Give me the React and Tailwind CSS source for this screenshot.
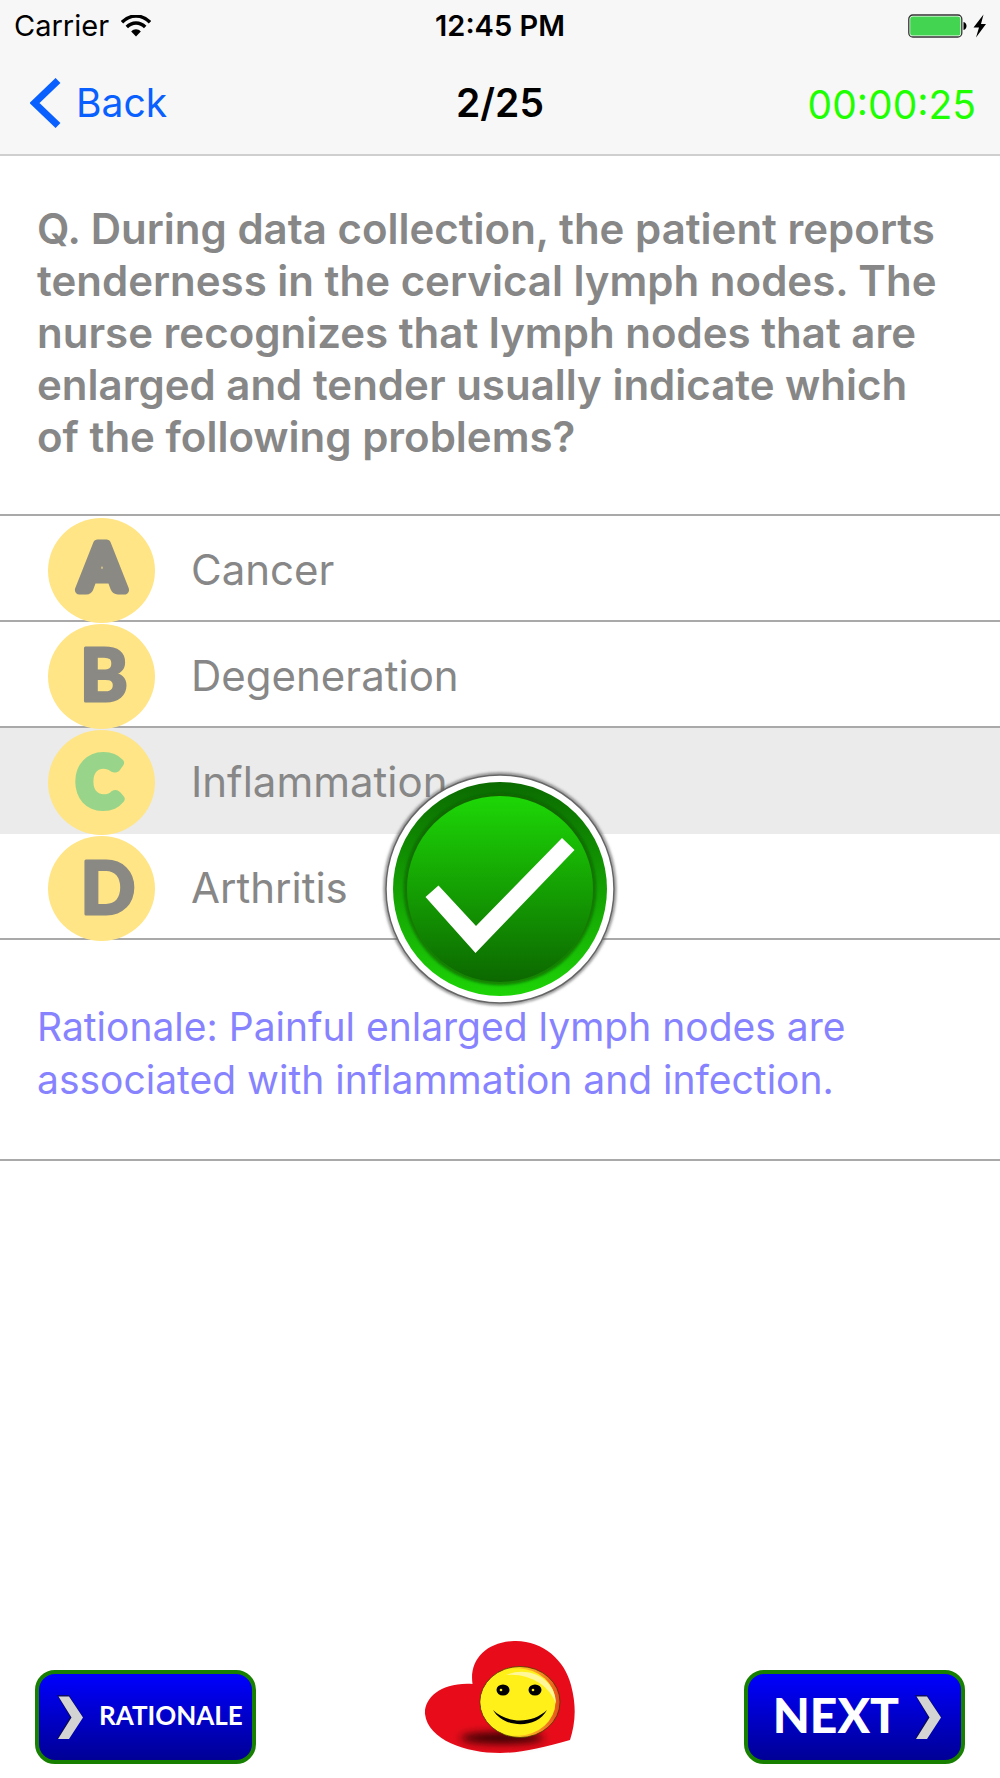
import { useState } from 'react';

const options = [
  { letter: 'A', label: 'Cancer', weight: 700, size: 64, stroke: 9, x: 54, y: 72 },
  { letter: 'B', label: 'Degeneration', weight: 900, size: 72, stroke: 3, x: 56, y: 77 },
  { letter: 'C', label: 'Inflammation', weight: 700, size: 66, stroke: 9, x: 51, y: 76 },
  { letter: 'D', label: 'Arthritis', weight: 900, size: 72, stroke: 3, x: 60, y: 78 },
];

const correct = 'C';

function StatusBar() {
  return (
    <div className="grid grid-cols-3 items-center px-[14px] h-[52px] text-[29px] leading-[36px] text-black">
      <div className="flex items-center gap-3">
        <span>Carrier</span>
        <svg width="30" height="22" viewBox="0 0 30 22" aria-hidden="true">
          <path d="M1 7.2C9 -1 21 -1 29 7.2" fill="none" stroke="#000" strokeWidth="3.4" />
          <path d="M5.8 12C11 6.600 19 6.600 24.200 12" fill="none" stroke="#000" strokeWidth="3.4" />
          <path d="M10.200 16.400C12.800 13.600 17.200 13.600 19.800 16.400L15 21.600Z" fill="#000" />
        </svg>
      </div>
      <span className="text-center font-semibold">12:45 PM</span>
      <svg className="justify-self-end" width="80" height="24" viewBox="0 0 80 24" aria-hidden="true">
        <rect x="2.800" y="1" width="53" height="22" rx="4" fill="#fff" stroke="#333" strokeWidth="1.300" />
        <rect x="4.200" y="2.400" width="50.200" height="19.200" rx="2.600" fill="#43d551" />
        <path d="M57.500 8C61.500 9 61.500 15 57.500 16Z" fill="#000" />
        <path d="M77.500 0.500L67.500 13.500H73L70 23.500L80 10H75Z" fill="#000" />
      </svg>
    </div>
  );
}

function Badge({ option }) {
  const color = option.letter === correct ? '#98d58a' : '#8a8984';
  return (
    <svg className="shrink-0" width="107" height="105" viewBox="0 0 107 105">
      <ellipse cx="53.500" cy="52.500" rx="53.500" ry="52.500" fill="#ffe585" />
      <text
        x={option.x}
        y={option.y}
        textAnchor="middle"
        fontFamily="Lato, sans-serif"
        fontWeight={option.weight}
        fontSize={option.size}
        fill={color}
        stroke={color}
        strokeWidth={option.stroke}
        strokeLinejoin="round"
      >
        {option.letter}
      </text>
    </svg>
  );
}

function CorrectMark() {
  return (
    <div className="fixed inset-0 flex items-center justify-center pointer-events-none">
      <svg width="240" height="240" viewBox="0 0 240 240" role="img" aria-label="Correct">
        <defs>
          <linearGradient id="ring" x1="0" y1="0" x2="0" y2="1">
            <stop offset="0" stopColor="#0b6b00" />
            <stop offset="1" stopColor="#1dd406" />
          </linearGradient>
          <linearGradient id="face" x1="0" y1="0" x2="0" y2="1">
            <stop offset="0" stopColor="#1dd706" />
            <stop offset="1" stopColor="#0c6800" />
          </linearGradient>
          <filter id="soft" x="-10%" y="-10%" width="120%" height="120%">
            <feGaussianBlur stdDeviation="1.500" />
          </filter>
        </defs>
        <circle cx="120" cy="120" r="115" fill="none" stroke="#555" strokeWidth="2" filter="url(#soft)" />
        <circle cx="120" cy="120" r="114" fill="#fff" stroke="#666" strokeWidth="1.500" />
        <circle cx="120" cy="120" r="107" fill="url(#ring)" />
        <circle cx="120" cy="120" r="94" fill="none" stroke="#0b6000" strokeOpacity="0.800" strokeWidth="4" filter="url(#soft)" />
        <circle cx="120" cy="120" r="93" fill="url(#face)" />
        <path d="M45.500 128L58.500 116.500L96 157L182 69L194.500 81L95.500 184Z" fill="#fff" />
      </svg>
    </div>
  );
}

function Arrow() {
  return (
    <svg className="shrink-0" width="26" height="44" viewBox="0 0 26 44" aria-hidden="true">
      <path d="M0 0H12L26 22L12 44H0L13 22Z" fill="#111" fillOpacity="0.600" />
      <path d="M1.500 1.500H12L26 22.500L12 44H1L14.500 22.500Z" fill="#d3d3d3" />
    </svg>
  );
}

function Heart() {
  return (
    <svg width="152" height="114" viewBox="0 0 152 114" role="img" aria-label="Smiling heart">
      <defs>
        <filter id="shade" x="-20%" y="-100%" width="140%" height="300%">
          <feGaussianBlur stdDeviation="4" />
        </filter>
        <linearGradient id="rim" x1="0" y1="0" x2="1" y2="0">
          <stop offset="0.350" stopColor="#fff01a" />
          <stop offset="0.700" stopColor="#fb9a25" />
          <stop offset="1" stopColor="#e5501c" />
        </linearGradient>
      </defs>
      <path
        d="M48.500 44C45 20 62 2 90 1C118 0 141 20 147 45C153 68 151 84 146 100C118 108 96 113 76 113C42 113 4 100 1 74C0 58 17 42 48.500 44Z"
        fill="#e80c1a"
      />
      <ellipse cx="78" cy="98" rx="42" ry="6" fill="#200" fillOpacity="0.900" filter="url(#shade)" />
      <ellipse cx="96" cy="62" rx="40" ry="35.500" fill="url(#rim)" stroke="#4a3a00" strokeWidth="0.800" />
      <ellipse cx="94" cy="62" rx="37.500" ry="33.500" fill="#fff01a" />
      <path d="M82 35C104 25 132 38 132 64C126 46 106 33 82 35Z" fill="#fff79a" />
      <ellipse cx="79" cy="50" rx="6.500" ry="5.600" fill="#000" />
      <ellipse cx="111" cy="50" rx="6.500" ry="5.600" fill="#000" />
      <circle cx="77" cy="50" r="1.300" fill="#fff01a" />
      <circle cx="109" cy="50" r="1.300" fill="#fff01a" />
      <path d="M69 70C84 84 108 84 123 70C113 89 80 89 69 70Z" fill="#000" />
    </svg>
  );
}

function App() {
  const [selected, setSelected] = useState('C');

  return (
    <div className="min-h-screen flex flex-col bg-white font-['Inter',sans-serif]">
      <header className="bg-[#f7f7f7] border-b-2 border-[#cfcfcf]">
        <StatusBar />
        <nav className="grid grid-cols-3 items-center h-[102px] px-6 text-[39px] leading-[48px]">
          <button className="flex items-center gap-[15px] pl-[6px] text-[#0a60ff]">
            <svg width="31" height="50" viewBox="0 0 31 50" aria-hidden="true">
              <path d="M28 2.500L4.500 25L28 47.500" fill="none" stroke="#0a60ff" strokeWidth="7" />
            </svg>
            Back
          </button>
          <h1 className="text-center font-semibold">2/25</h1>
          <time className="justify-self-end pt-1 text-[#1eff00]">00:00:25</time>
        </nav>
      </header>

      <main>
        <p className="pl-[37px] pr-14 pt-[47px] pb-[51px] text-[42px] leading-[52px] font-semibold text-[#878787]">
          Q. During data collection, the patient reports tenderness in the cervical lymph nodes. The nurse
          recognizes that lymph nodes that are enlarged and tender usually indicate which of the following
          problems?
        </p>

        <ul className="border-t-2 border-[#a9a9a9]">
          {options.map((option) => (
            <li key={option.letter}>
              <button
                onClick={() => setSelected(option.letter)}
                className={
                  selected === option.letter
                    ? 'flex items-center gap-9 w-full h-[106px] pl-12 pt-1 border-b-2 border-[#ebebeb] bg-[#ebebeb]'
                    : 'flex items-center gap-9 w-full h-[106px] pl-12 pt-1 border-b-2 border-[#a9a9a9]'
                }
              >
                <Badge option={option} />
                <span className="text-[42px] leading-[52px] text-[#878787]">{option.label}</span>
              </button>
            </li>
          ))}
        </ul>

        <p className="pl-[37px] pr-14 pt-[60px] pb-[53px] border-b-2 border-[#a9a9a9] text-[39px] leading-[53px] text-[#8783ff]">
          Rationale: Painful enlarged lymph nodes are associated with inflammation and infection.
        </p>
      </main>

      <footer className="mt-auto grid grid-cols-3 items-end px-[35px] pb-[14px] font-['Lato',sans-serif] font-black text-white">
        <button className="flex items-center gap-4 w-[221px] h-[94px] pl-[18px] rounded-[20px] border-4 border-[#178000] bg-linear-to-b from-[#0000ff] to-[#000096]">
          <Arrow />
          <span className="pb-1 text-[26px] leading-[32px] font-bold">RATIONALE</span>
        </button>
        <div className="justify-self-center pb-[10px]">
          <Heart />
        </div>
        <button className="flex items-center justify-end gap-4 w-[221px] h-[94px] pr-5 justify-self-end rounded-[20px] border-4 border-[#178000] bg-linear-to-b from-[#0000ff] to-[#000096]">
          <span className="pb-1 text-[48px] leading-[52px]">NEXT</span>
          <Arrow />
        </button>
      </footer>

      <CorrectMark />
    </div>
  );
}

export default App;
